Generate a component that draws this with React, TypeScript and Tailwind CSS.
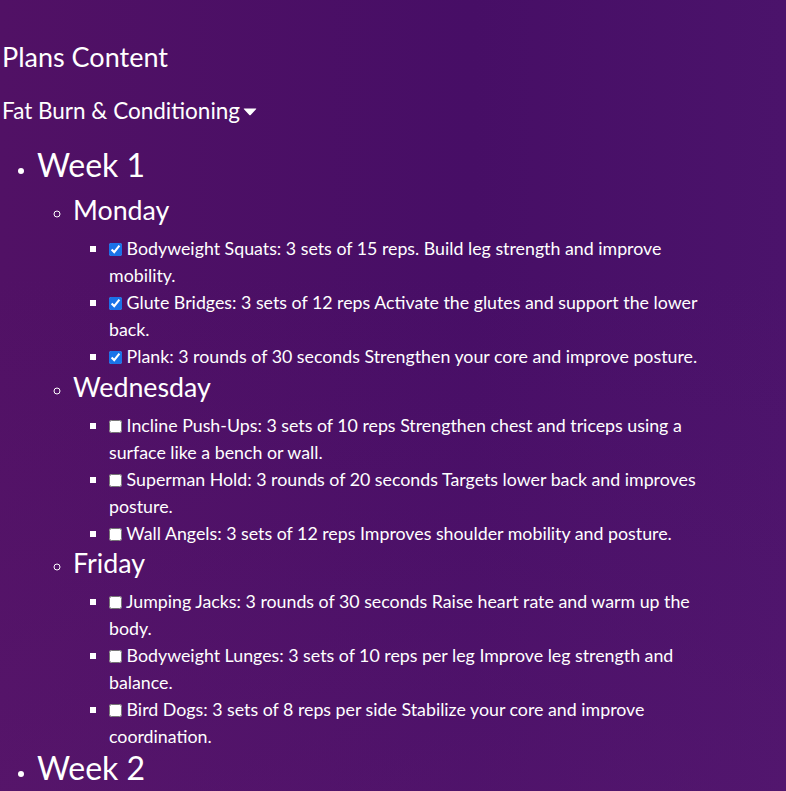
import React from "react";

type Item = { name: string; text: string; done: boolean };
type Day = { day: string; items: Item[] };

const week1: Day[] = [
  {
    day: "Monday",
    items: [
      { name: "Bodyweight Squats", text: "3 sets of 15 reps. Build leg strength and improve mobility.", done: true },
      { name: "Glute Bridges", text: "3 sets of 12 reps Activate the glutes and support the lower back.", done: true },
      { name: "Plank", text: "3 rounds of 30 seconds Strengthen your core and improve posture.", done: true },
    ],
  },
  {
    day: "Wednesday",
    items: [
      { name: "Incline Push-Ups", text: "3 sets of 10 reps Strengthen chest and triceps using a surface like a bench or wall.", done: false },
      { name: "Superman Hold", text: "3 rounds of 20 seconds Targets lower back and improves posture.", done: false },
      { name: "Wall Angels", text: "3 sets of 12 reps Improves shoulder mobility and posture.", done: false },
    ],
  },
  {
    day: "Friday",
    items: [
      { name: "Jumping Jacks", text: "3 rounds of 30 seconds Raise heart rate and warm up the body.", done: false },
      { name: "Bodyweight Lunges", text: "3 sets of 10 reps per leg Improve leg strength and balance.", done: false },
      { name: "Bird Dogs", text: "3 sets of 8 reps per side Stabilize your core and improve coordination.", done: false },
    ],
  },
];

function DayBlock({ d, first }: { d: Day; first?: boolean }) {
  return (
    <li className={first ? "mt-[9px]" : ""}>
      <div className="text-[26.8px] leading-[32px]">{d.day}</div>
      <ul className="list-[square] pl-[36px] mt-[9px] mb-[0.5px]">
        {d.items.map((it) => (
          <li key={it.name} className="leading-[27px]">
            <input
              type="checkbox"
              defaultChecked={it.done}
              className="w-[13px] h-[13px] m-0 align-[-1px] accent-[#1a73e8]"
            />{" "}
            {it.name}: {it.text}
          </li>
        ))}
      </ul>
    </li>
  );
}

export default function App() {
  return (
    <div
      className="min-h-screen text-white bg-[linear-gradient(180deg,rgba(95,25,110,0)_35%,rgba(95,28,115,0.35)_100%),linear-gradient(90deg,#511165_0%,#470e66_60%,#4b136b_100%)]"
      style={{ fontFamily: "Lato, 'Open Sans', sans-serif" }}
    >
      <div className="w-[716px] pl-[2px] pt-[41px]">
        <div className="text-[27px] leading-[32px]">Plans Content</div>
        <div className="mt-[24px] text-[22.5px] leading-[28px] flex items-center">
          <span>Fat Burn &amp; Conditioning</span>
          <svg width="14" height="8" viewBox="0 0 14 8" className="ml-[3px] mt-[1px]">
            <path d="M1.2 0.5 H12.8 Q13.8 0.5 13 1.3 L7.7 7 Q7 7.7 6.3 7 L1 1.3 Q0.2 0.5 1.2 0.5 Z" fill="white" />
          </svg>
        </div>
        <ul className="list-disc pl-[35px] mt-[20px] text-[17.8px]">
          <li>
            <div className="text-[32px] leading-[40px]">Week 1</div>
            <ul className="list-[circle] pl-[36px]">
              {week1.map((d, i) => (
                <DayBlock key={d.day} d={d} first={i === 0} />
              ))}
            </ul>
          </li>
          <li className="-mt-[2.5px]">
            <div className="text-[32px] leading-[40px]">Week 2</div>
          </li>
        </ul>
      </div>
    </div>
  );
}
